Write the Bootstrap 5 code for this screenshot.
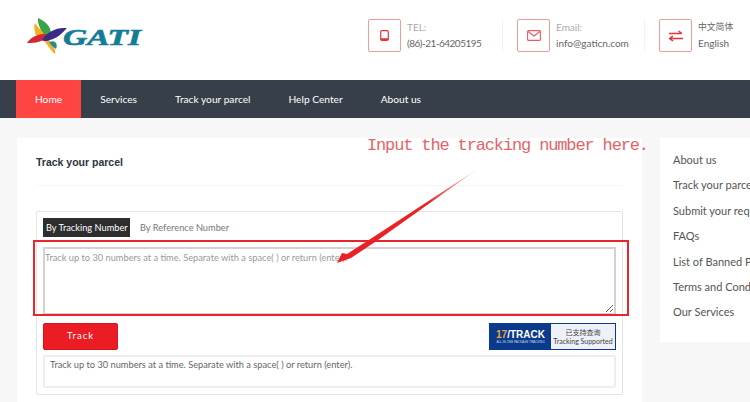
<!DOCTYPE html>
<html lang="en">
<head>
    <meta charset="UTF-8">
    <meta name="viewport" content="width=device-width, initial-scale=1.0">
    <title>Track your parcel</title>
    <link href="https://cdn.jsdelivr.net/npm/bootstrap@5.3.2/dist/css/bootstrap.min.css" rel="stylesheet">
    <style>
        html, body { height: 402px; overflow: hidden; }
        body {
            background-color: #f7f7f7;
            font-family: Lato, "Noto Sans CJK SC", sans-serif;
            font-size: 9.25px;
            color: #555;
        }
        .top-head { height: 80px; background: #fff; padding-left: 26px; }
        .logo-box { width: 342px; flex: none; height: 80px; }
        .contact-item { height: 33px; margin-top: 19px; flex: none; }
        .contact-sep { border-right: 1px solid #f2f2f2; }
        .contact-one { width: 135px; }
        .contact-two { width: 142px; padding-left: 14px; }
        .contact-three { padding-left: 14px; }
        .ico-box {
            width: 33px; height: 33px; flex: none; margin-right: 6px;
            border: 1px solid #f09a9a; border-radius: 2px;
        }
        .contact-label { color: #aaa; line-height: 16px; font-size: 10px; }
        .contact-val { color: #666; line-height: 16px; font-size: 10px; white-space: nowrap; }
        .contact-num { letter-spacing: -.5px; }
        .contact-cjk { font-size: 8.8px; }
        .main-nav { height: 38px; background: #37404a; padding-left: 16px; }
        .main-nav .nav-link {
            color: #fff; font-size: 10.2px; line-height: 38px; padding: 0 19px;
        }
        .main-nav .nav-link.active { background: #ff4444; }
        .page-wrap { padding: 20px 0 0 17px; gap: 18px; width: 750px; }
        .parcel-panel { width: 625px; height: 264px; background: #fff; padding: 0 19px; flex: none; }
        .panel-title {
            font-family: "Liberation Sans", sans-serif; font-weight: 700; font-size: 10.5px;
            color: #2b3440; height: 48px; line-height: 49px; margin: 0;
            border-bottom: 1px solid #f6f6f6;
        }
        .track-box {
            margin-top: 25px; height: 184px; width: 587px;
            border: 1px solid #e4e4e4; border-radius: 2px; padding: 6px 6px 0;
        }
        .tab-on { background: #2d2d2d; color: #fff; height: 19px; line-height: 19px; padding: 0 3px; width: 87px; white-space: nowrap; }
        .tab-off { color: #777; line-height: 19px; padding-left: 10px; white-space: nowrap; }
        .track-input {
            display: block; width: 573px; height: 68px; margin-top: 10px; padding: 1px 0;
            border: 2px solid #d2d2d2; border-radius: 0; font-size: 9.25px; line-height: 15px; color: #555;
        }
        .track-input::placeholder { color: #999; opacity: 1; }
        .action-row { width: 573px; }
        .btn-track {
            width: 75px; height: 27px; padding: 0; background: #ec1c24; border: 1px solid #d8141c;
            border-radius: 2px; color: #fff; font-size: 9.5px; letter-spacing: 1px;
        }
        .badge-17 { width: 127px; height: 27px; border: 1px solid #0a3a8c; }
        .badge-left {
            width: 61px; background: #0a3a8c; color: #fff; flex: none;
            font-family: "Liberation Sans", sans-serif; font-weight: 700; font-size: 10px; line-height: 11px;
        }
        .badge-left b { color: #f2a33a; }
        .badge-tag { font-size: 3px; line-height: 4px; font-weight: 400; color: #cfd8ee; white-space: nowrap; }
        .badge-right { background: #eef1f8; color: #444; font-size: 7px; line-height: 9px; white-space: nowrap; }
        .note-box {
            height: 33px; margin-top: 5px; width: 573px; padding: 0 5px;
            border: 2px solid #eee; border-radius: 2px; color: #666; line-height: 15px; white-space: nowrap;
        }
        .side-panel { width: 90px; height: 204px; background: #fff; padding: 9px 0 9px 13px; flex: none; overflow: hidden; }
        .side-panel a {
            display: block; color: #555; font-size: 11px; line-height: 25.4px;
            text-decoration: none; white-space: nowrap;
        }
        .mark-box {
            position: absolute; left: 33px; top: 240px; width: 596px; height: 76px;
            border: 2px solid #e8252c; pointer-events: none;
        }
        .mark-text {
            position: absolute; left: 367px; top: 136px; white-space: nowrap;
            font-family: "Liberation Mono", monospace; font-size: 17px; line-height: 20px;
            letter-spacing: -1.14px; color: #e5636a;
        }
        .mark-arrow { position: absolute; left: 0; top: 0; pointer-events: none; }
    </style>
</head>
<body>

<header class="top-head d-flex align-items-start">
    <div class="logo-box">
        <svg width="120" height="80" viewBox="26 0 120 80">
            <path d="M38 18c7 3 13 8 13 16-1 3-3 6-5 7-2-8-9-14-8-23z" fill="#3aa547"/>
            <path d="M35 23c5 7 11 12 16 20 3 4 5 7 4 11-5-4-7-9-11-13-4-3-9-5-9-9-1-3-1-6 0-9z" fill="#f4b223"/>
            <path d="M27 43c3-5 9-8 15-9 3 0 5 0 7 1-2 3-4 5-8 6-5 2-9 2-14 2z" fill="#d8262f"/>
            <path d="M67 28c-4 4-8 9-14 11-5 2-9 3-11 1 3-5 7-8 12-10 4-2 9-2 13-2z" fill="#3b2a86"/>
            <path d="M49 42c3-1 5-1 7 1 1 2 1 4 0 6-3-2-5-4-7-7z" fill="#1f8f8a"/>
            <text x="63" y="44.5" textLength="78" lengthAdjust="spacingAndGlyphs" font-family="Liberation Serif" font-weight="700" font-style="italic" font-size="23" fill="#127d94" stroke="#127d94" stroke-width=".6">GATI</text>
        </svg>
    </div>
    <div class="contact-item contact-one d-flex">
        <div class="ico-box d-flex align-items-center justify-content-center">
            <svg width="9" height="11" viewBox="0 0 9 11"><rect x=".7" y=".7" width="7.6" height="9.600" rx="1.3" fill="none" stroke="#e8323a" stroke-width="1.2"/><path d="M.7 8.200h7.600v1a1 1 0 0 1-1 1H1.700a1 1 0 0 1-1-1z" fill="#e8323a"/></svg>
        </div>
        <div class="contact-sep flex-grow-1">
            <div class="contact-label">TEL:</div>
            <div class="contact-val contact-num">(86)-21-64205195</div>
        </div>
    </div>
    <div class="contact-item contact-two d-flex">
        <div class="ico-box d-flex align-items-center justify-content-center">
            <svg width="14" height="11" viewBox="0 0 14 11"><rect x=".6" y=".6" width="12.8" height="9.8" rx="1" fill="none" stroke="#ee5a60" stroke-width="1.1"/><path d="M1 1.5 7 6l6-4.5" fill="none" stroke="#ee5a60" stroke-width="1.1"/></svg>
        </div>
        <div class="contact-sep flex-grow-1">
            <div class="contact-label">Email:</div>
            <div class="contact-val">info@gaticn.com</div>
        </div>
    </div>
    <div class="contact-item contact-three d-flex">
        <div class="ico-box d-flex align-items-center justify-content-center">
            <svg width="14" height="12" viewBox="0 0 14 12"><path d="M0 3.5h12.5M9.500 1 13 3.5M1 8.500h13M4 6 .7 8.500 4 11" fill="none" stroke="#e8323a" stroke-width="1.5"/></svg>
        </div>
        <div>
            <div class="contact-val contact-cjk">中文简体</div>
            <div class="contact-val">English</div>
        </div>
    </div>
</header>

<ul class="nav main-nav">
    <li class="nav-item"><a class="nav-link active" href="#">Home</a></li>
    <li class="nav-item"><a class="nav-link" href="#">Services</a></li>
    <li class="nav-item"><a class="nav-link" href="#">Track your parcel</a></li>
    <li class="nav-item"><a class="nav-link" href="#">Help Center</a></li>
    <li class="nav-item"><a class="nav-link" href="#">About us</a></li>
</ul>

<div class="page-wrap d-flex align-items-start">
    <section class="parcel-panel">
        <h1 class="panel-title">Track your parcel</h1>
        <div class="track-box">
            <div class="d-flex">
                <div class="tab-on">By Tracking Number</div>
                <div class="tab-off">By Reference Number</div>
            </div>
            <textarea class="form-control track-input" placeholder="Track up to 30 numbers at a time. Separate with a space( ) or return (enter)."></textarea>
            <div class="action-row d-flex justify-content-between mt-2">
                <button class="btn btn-track" type="button">Track</button>
                <div class="badge-17 d-flex">
                    <div class="badge-left d-flex flex-column align-items-center justify-content-center">
                        <div><b>17</b>/TRACK</div>
                        <div class="badge-tag">ALL-IN-ONE PACKAGE TRACKING</div>
                    </div>
                    <div class="badge-right flex-grow-1 text-center d-flex flex-column justify-content-center">
                        <div>已支持查询</div>
                        <div>Tracking Supported</div>
                    </div>
                </div>
            </div>
            <div class="note-box">Track up to 30 numbers at a time. Separate with a space( ) or return (enter).</div>
        </div>
    </section>
    <aside class="side-panel">
        <a href="#">About us</a>
        <a href="#">Track your parcel</a>
        <a href="#">Submit your request</a>
        <a href="#">FAQs</a>
        <a href="#">List of Banned Products</a>
        <a href="#">Terms and Conditions</a>
        <a href="#">Our Services</a>
    </aside>
</div>

<div class="mark-box"></div>
<div class="mark-text">Input the tracking number here.</div>
<svg class="mark-arrow" width="750" height="402" viewBox="0 0 750 402">
    <defs>
        <linearGradient id="tailFade" x1="479" y1="168" x2="430" y2="203" gradientUnits="userSpaceOnUse">
            <stop offset="0" stop-color="#ec2027" stop-opacity=".1"/>
            <stop offset="1" stop-color="#ec2027"/>
        </linearGradient>
    </defs>
    <path d="M479 168 378 240 351 258 337 263 342 253 347 254 375 236z" fill="url(#tailFade)"/>
</svg>

<script src="https://cdn.jsdelivr.net/npm/bootstrap@5.3.2/dist/js/bootstrap.bundle.min.js"></script>
</body>
</html>
